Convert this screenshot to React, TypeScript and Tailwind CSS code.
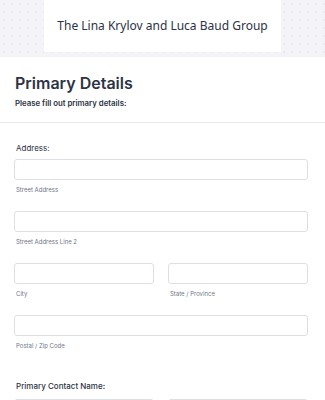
export default function App() {
  return (
    <div className="min-h-[400px] bg-[#f4f4f8] bg-[radial-gradient(#e9e9f1_1px,transparent_1px)] bg-[length:8px_8px] font-['Inter',sans-serif] text-[#2c3345]">
      <div className="mx-auto flex h-[52px] w-[237px] items-center justify-center bg-white">
        <h1 className="font-['Noto_Sans',sans-serif] text-[12px] text-[#2c3345]">
          The Lina Krylov and Luca Baud Group
        </h1>
      </div>
      <div className="mt-[5px] bg-white">
        <div className="border-b border-[#eaebf2] px-[15px] pb-[14px] pt-[15px]">
          <h2 className="text-[16px] font-semibold leading-[22px]">Primary Details</h2>
          <p className="mt-[4px] text-[7.8px] font-semibold leading-[10px]">
            Please fill out primary details:
          </p>
        </div>
        <div className="pl-[14px] pr-[17px] pt-[19px]">
          <div className="mb-[5px] pl-[2px] text-[8px] leading-[12px]">Address:</div>
          <Field label="Street Address" />
          <Field label="Street Address Line 2" />
          <div className="grid grid-cols-2 gap-[14px]">
            <Field label="City" />
            <Field label="State / Province" />
          </div>
          <Field label="Postal / Zip Code" />
          <div className="mb-[7px] mt-[31px] pl-[2px] text-[8px] font-medium leading-[12px]">
            Primary Contact Name:
          </div>
          <div className="grid grid-cols-2 gap-[14px]">
            <Field label="First Name" />
            <Field label="Last Name" />
          </div>
        </div>
      </div>
    </div>
  );
}

function Field({ label }: { label: string }) {
  return (
    <div className="mb-[18px]">
      <input className="block h-[21px] w-full rounded-[3px] border border-[#dcdfe8] bg-white" />
      <div className="mt-[6px] pl-[2px] text-[6px] leading-[7px] text-[#6f7689]">{label}</div>
    </div>
  );
}
